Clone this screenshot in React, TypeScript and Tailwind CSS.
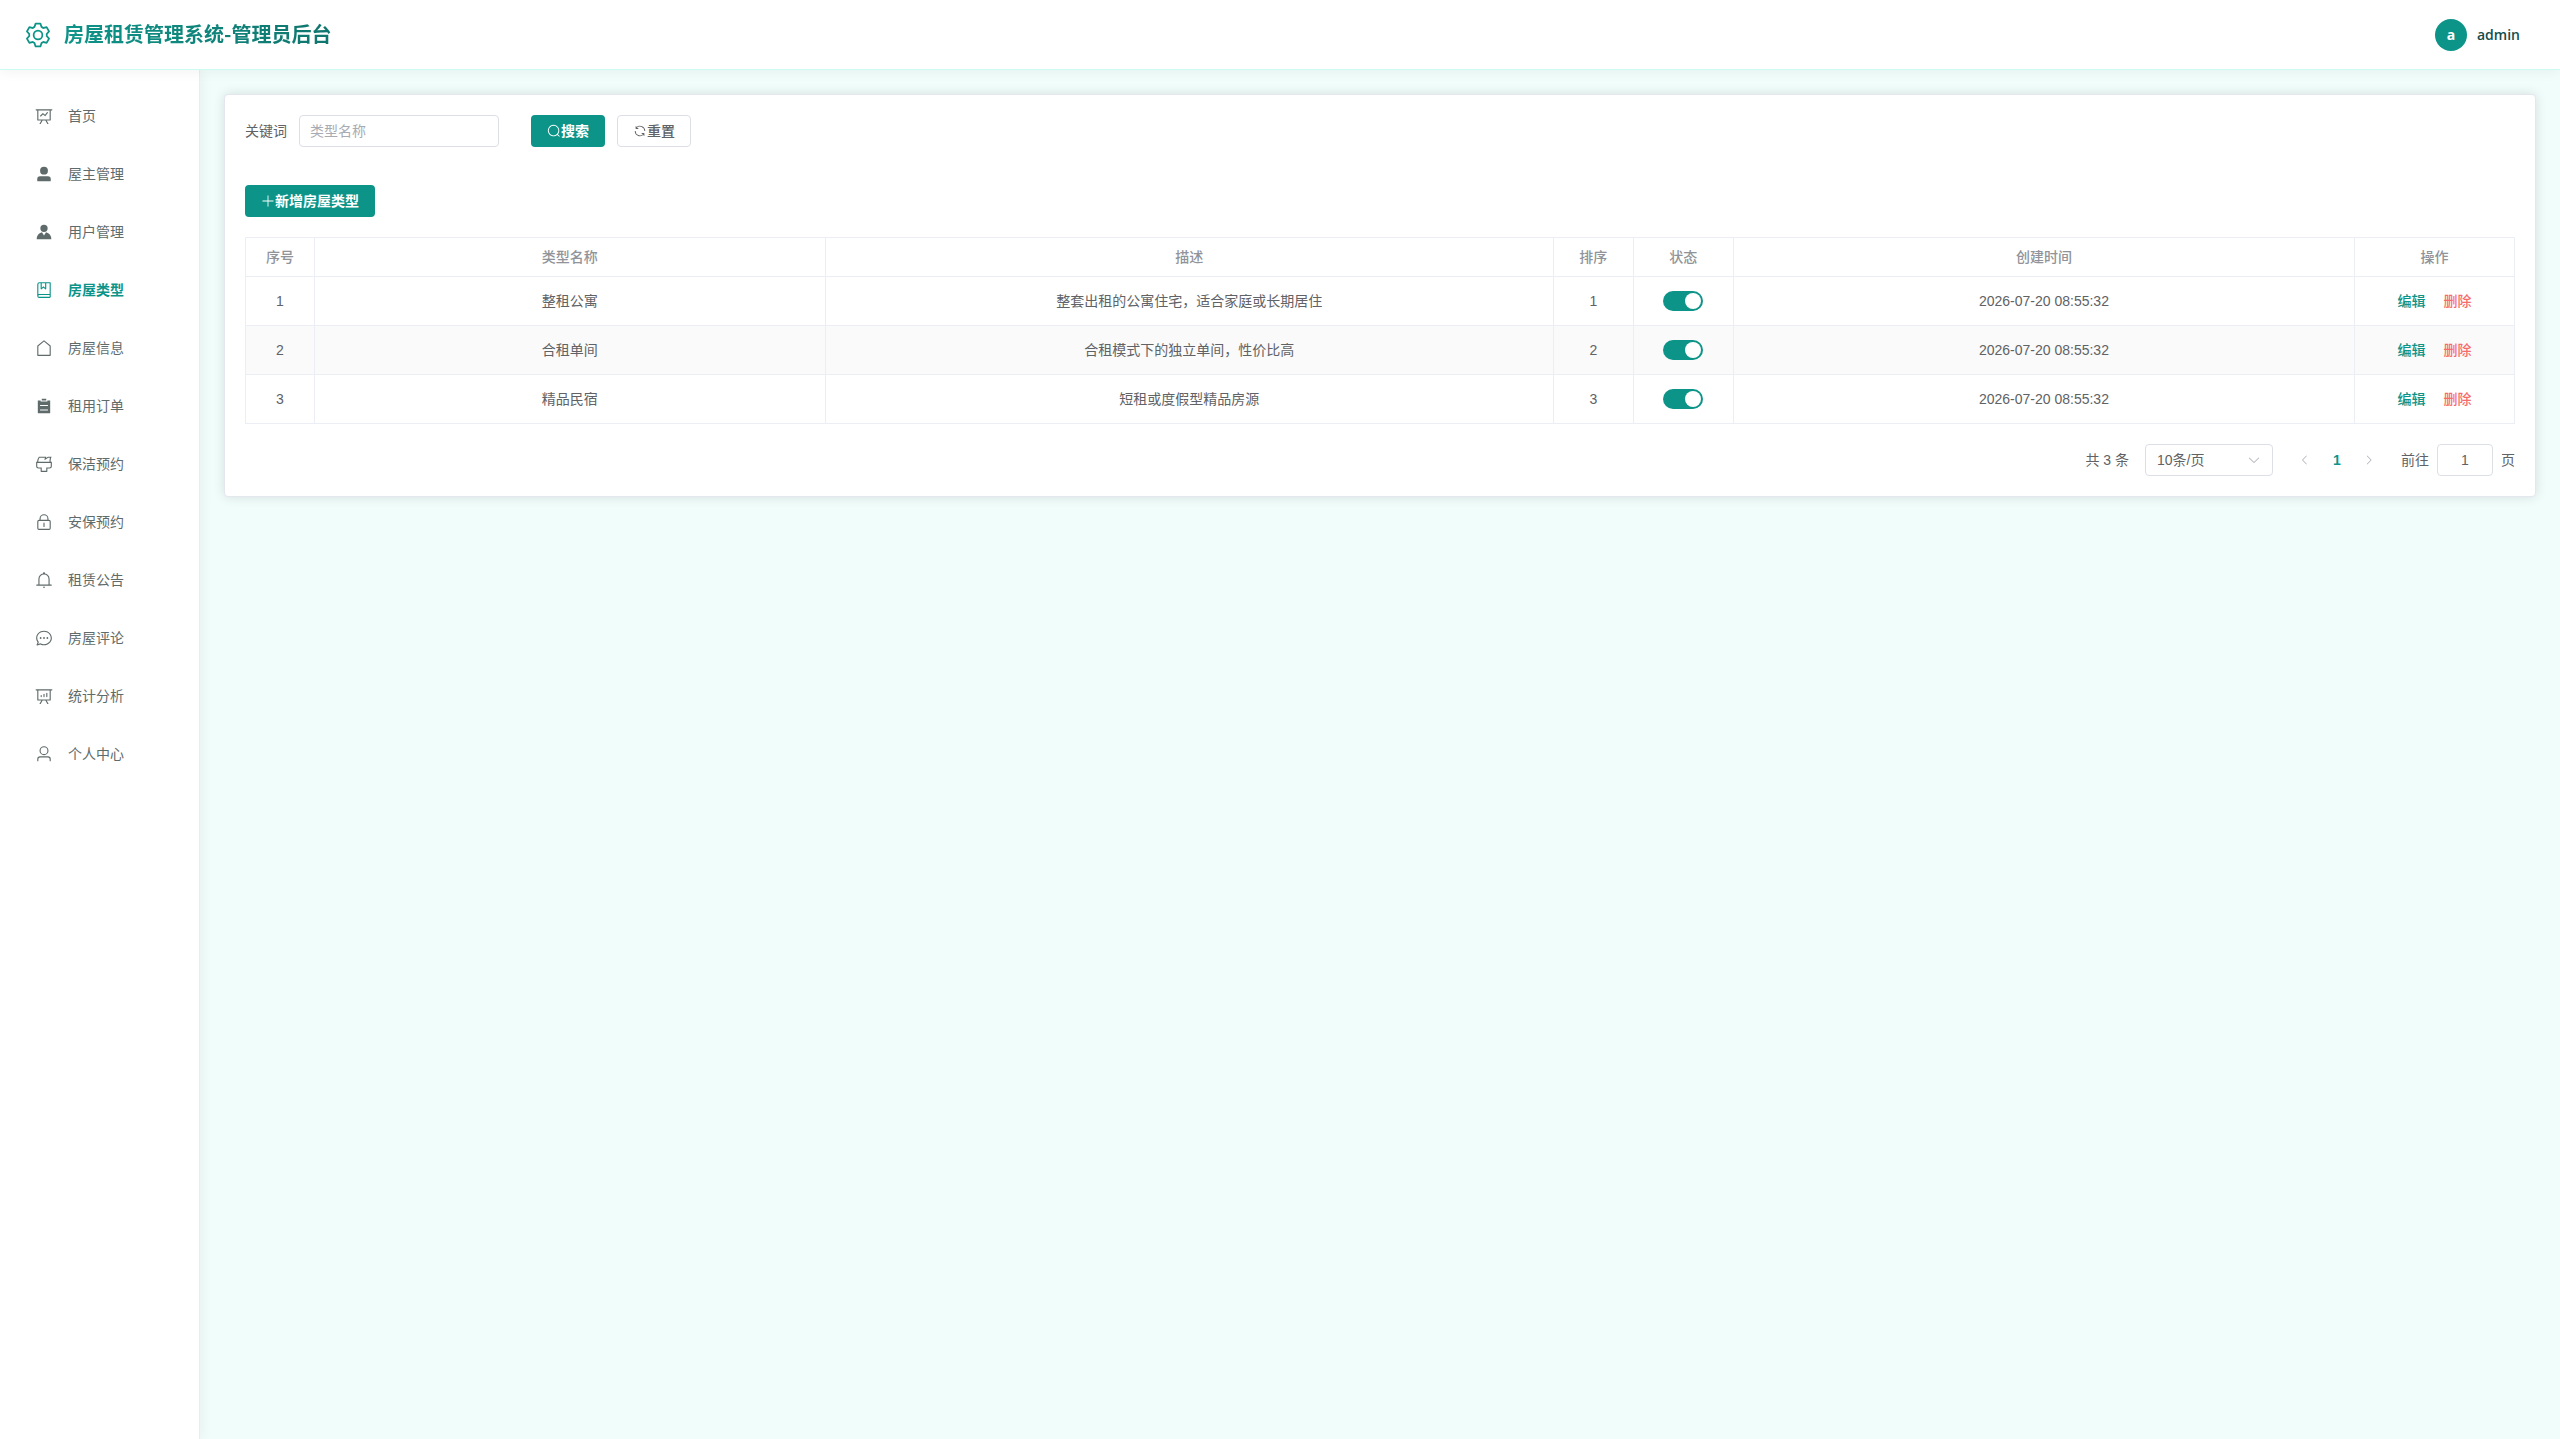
import React, { useState } from "react";

const paths = {
  setting:
    "M600.704 64a32 32 0 0 1 30.464 22.208l35.2 109.376c14.784 7.232 28.928 15.36 42.432 24.512l112.384-24.192a32 32 0 0 1 34.432 15.36L944.32 364.8a32 32 0 0 1-4.032 37.504l-77.12 85.12a357.12 357.12 0 0 1 0 49.024l77.12 85.248a32 32 0 0 1 4.032 37.504l-88.704 153.6a32 32 0 0 1-34.432 15.296L708.8 803.904c-13.44 9.088-27.648 17.28-42.368 24.512l-35.264 109.376A32 32 0 0 1 600.704 960H423.296a32 32 0 0 1-30.464-22.208L357.696 828.48a351.616 351.616 0 0 1-42.56-24.64l-112.32 24.256a32 32 0 0 1-34.432-15.36L79.68 659.2a32 32 0 0 1 4.032-37.504l77.12-85.248a357.12 357.12 0 0 1 0-48.896l-77.12-85.248A32 32 0 0 1 79.68 364.8l88.704-153.6a32 32 0 0 1 34.432-15.296l112.32 24.256c13.568-9.152 27.776-17.408 42.56-24.64l35.2-109.312A32 32 0 0 1 423.232 64H600.64zm-23.424 64H446.72l-36.352 113.088-24.512 11.968a294.113 294.113 0 0 0-34.816 20.096l-22.656 15.36-116.224-25.088-65.28 113.152 79.68 88.192-1.92 27.136a293.12 293.12 0 0 0 0 40.192l1.92 27.136-79.808 88.192 65.344 113.152 116.224-25.024 22.656 15.296a294.113 294.113 0 0 0 34.816 20.096l24.512 11.968L446.72 896h130.688l36.48-113.152 24.448-11.904a288.282 288.282 0 0 0 34.752-20.096l22.592-15.296 116.288 25.024 65.28-113.152-79.744-88.192 1.92-27.136a293.12 293.12 0 0 0 0-40.256l-1.92-27.136 79.808-88.128-65.344-113.152-116.288 24.96-22.592-15.232a287.616 287.616 0 0 0-34.752-20.096l-24.448-11.904L577.344 128zM512 320a192 192 0 1 1 0 384 192 192 0 0 1 0-384zm0 64a128 128 0 1 0 0 256 128 128 0 0 0 0-256z",
  dataLine:
    "M359.168 768H160a32 32 0 0 1-32-32V192H64a32 32 0 0 1 0-64h896a32 32 0 1 1 0 64h-64v544a32 32 0 0 1-32 32H665.216l110.848 192h-73.856L591.36 768H433.024L322.176 960H248.32l110.848-192zM832 192H192v512h640V192zM342.656 534.656a32 32 0 1 1-45.312-45.312L444.992 341.76l125.44 94.08L679.04 300.032a32 32 0 1 1 49.92 39.936L581.632 524.224 451.008 426.24 342.656 534.592z",
  userFilled:
    "M288 320a224 224 0 1 0 448 0 224 224 0 1 0-448 0zm544 608H160a32 32 0 0 1-32-32v-96a160 160 0 0 1 160-160h448a160 160 0 0 1 160 160v96a32 32 0 0 1-32 32z",
  avatar:
    "M628.736 528.896A416 416 0 0 1 928 928H96a415.872 415.872 0 0 1 299.264-399.104L512 704l116.736-175.104zM720 304a208 208 0 1 1-416 0 208 208 0 0 1 416 0z",
  collection:
    "M192 736h640V128H256a64 64 0 0 0-64 64v544zm64-672h608a32 32 0 0 1 32 32v672a32 32 0 0 1-32 32H160l-32 57.536V192A128 128 0 0 1 256 64zM240 800a48 48 0 1 0 0 96h592v-96H240zm0-64h656v160a64 64 0 0 1-64 64H240a112 112 0 0 1 0-224zm144-608v250.88l96-76.8 96 76.8V128H384zm-64-64h320v381.44a32 32 0 0 1-51.968 24.96L480 384l-108.032 86.4A32 32 0 0 1 320 445.44V64z",
  house:
    "M192 413.952V896h640V413.952L512 147.328 192 413.952zM139.52 374.4l352-293.312a32 32 0 0 1 40.96 0l352 293.312A32 32 0 0 1 896 398.976V928a32 32 0 0 1-32 32H160a32 32 0 0 1-32-32V398.976a32 32 0 0 1 11.52-24.576z",
  list: "M704 192h160v736H160V192h160v64h384v-64zM288 512h448v-64H288v64zm0 256h448v-64H288v64zm96-576V96h256v96H384z",
  brush:
    "M896 448H128v192a64 64 0 0 0 64 64h192v192h256V704h192a64 64 0 0 0 64-64V448zm-770.752-64c0-47.552 5.248-90.24 15.552-128 14.72-54.016 42.496-107.392 83.2-160h417.28l-15.36 70.336L736 96h211.2c-24.832 42.88-41.92 96.256-51.2 160a663.872 663.872 0 0 0-6.144 128H960v256a128 128 0 0 1-128 128H704v160a32 32 0 0 1-32 32H352a32 32 0 0 1-32-32V768H192A128 128 0 0 1 64 640V384h61.248zm64 0h636.544c-2.048-45.824.256-91.584 6.848-137.216 4.48-30.848 10.688-59.776 18.688-86.784h-96.64l-221.12 141.248L561.92 160H256.512c-25.856 37.888-43.776 75.456-53.952 112.832-8.768 32.064-13.248 69.12-13.312 111.168z",
  lock: "M224 448a32 32 0 0 0-32 32v384a32 32 0 0 0 32 32h576a32 32 0 0 0 32-32V480a32 32 0 0 0-32-32H224zm0-64h576a96 96 0 0 1 96 96v384a96 96 0 0 1-96 96H224a96 96 0 0 1-96-96V480a96 96 0 0 1 96-96zM512 544a32 32 0 0 1 32 32v192a32 32 0 1 1-64 0V576a32 32 0 0 1 32-32zm192-160v-64a192 192 0 1 0-384 0v64h384zM512 64a256 256 0 0 1 256 256v128H256V320A256 256 0 0 1 512 64z",
  bell: "M512 64a64 64 0 0 1 64 64v64H448v-64a64 64 0 0 1 64-64zM256 768h512V448a256 256 0 1 0-512 0v320zm256-640a320 320 0 0 1 320 320v384H192V448a320 320 0 0 1 320-320zM96 768h832q32 0 32 32t-32 32H96q-32 0-32-32t32-32zm352 128h128a64 64 0 0 1-128 0z",
  chat: "m174.72 855.68 135.296-45.12 23.68 11.84C388.096 849.536 448.576 864 512 864c211.84 0 384-166.784 384-352S723.84 160 512 160 128 326.784 128 512c0 69.12 24.96 139.264 70.848 199.232l22.08 28.8-46.272 115.584zm-45.248 82.56A32 32 0 0 1 89.6 896l58.368-145.92C94.72 680.32 64 596.864 64 512 64 299.904 256 96 512 96s448 203.904 448 416-192 416-448 416a461.056 461.056 0 0 1-206.912-48.384l-175.616 58.56zM512 563.2a51.2 51.2 0 1 1 0-102.4 51.2 51.2 0 0 1 0 102.4zm192 0a51.2 51.2 0 1 1 0-102.4 51.2 51.2 0 0 1 0 102.4zm-384 0a51.2 51.2 0 1 1 0-102.4 51.2 51.2 0 0 1 0 102.4z",
  dataAnalysis:
    "m665.216 768 110.848 192h-73.856L591.36 768H433.024L322.176 960H248.32l110.848-192H160a32 32 0 0 1-32-32V192H64a32 32 0 0 1 0-64h896a32 32 0 1 1 0 64h-64v544a32 32 0 0 1-32 32H665.216zM832 192H192v512h640V192zM352 448a32 32 0 0 1 32 32v64a32 32 0 0 1-64 0v-64a32 32 0 0 1 32-32zm160-64a32 32 0 0 1 32 32v128a32 32 0 0 1-64 0V416a32 32 0 0 1 32-32zm160-64a32 32 0 0 1 32 32v192a32 32 0 1 1-64 0V352a32 32 0 0 1 32-32z",
  user: "M512 512a192 192 0 1 0 0-384 192 192 0 0 0 0 384zm0 64a256 256 0 1 1 0-512 256 256 0 0 1 0 512zm320 320v-96a96 96 0 0 0-96-96H288a96 96 0 0 0-96 96v96a32 32 0 1 1-64 0v-96a160 160 0 0 1 160-160h448a160 160 0 0 1 160 160v96a32 32 0 1 1-64 0z",
  search:
    "m795.904 750.72 124.992 124.928a32 32 0 0 1-45.248 45.248L750.656 795.904a416 416 0 1 1 45.248-45.248zM480 832a352 352 0 1 0 0-704 352 352 0 0 0 0 704z",
  refresh:
    "M771.776 794.88A384 384 0 0 1 128 512h64a320 320 0 0 0 555.712 216.448H654.72a32 32 0 1 1 0-64h149.056a32 32 0 0 1 32 32v148.928a32 32 0 1 1-64 0v-50.56zM276.288 295.616h92.992a32 32 0 0 1 0 64H220.16a32 32 0 0 1-32-32V178.56a32 32 0 0 1 64 0v50.56A384 384 0 0 1 896.128 512h-64a320 320 0 0 0-555.776-216.384z",
  plus: "M480 480V128a32 32 0 0 1 64 0v352h352a32 32 0 1 1 0 64H544v352a32 32 0 1 1-64 0V544H128a32 32 0 0 1 0-64h352z",
  arrowDown:
    "M831.872 340.864 512 652.672 192.128 340.864a30.592 30.592 0 0 0-42.752 0 29.12 29.12 0 0 0 0 41.6L489.664 714.24a32 32 0 0 0 44.672 0l340.288-331.712a29.12 29.12 0 0 0 0-41.728 30.592 30.592 0 0 0-42.752 0z",
  arrowLeft:
    "M609.408 149.376 277.76 489.6a32 32 0 0 0 0 44.672l331.648 340.352a29.12 29.12 0 0 0 41.728 0 30.592 30.592 0 0 0 0-42.752L339.264 511.936l311.872-319.872a30.592 30.592 0 0 0 0-42.688 29.12 29.12 0 0 0-41.728 0z",
  arrowRight:
    "M340.864 149.312a30.592 30.592 0 0 0 0 42.752L652.736 512 340.864 831.872a30.592 30.592 0 0 0 0 42.752 29.12 29.12 0 0 0 41.728 0L714.24 534.336a32 32 0 0 0 0-44.672L382.592 149.376a29.12 29.12 0 0 0-41.728 0z",
};

type IconName = keyof typeof paths;

function Icon({ name, className }: { name: IconName; className: string }) {
  return (
    <svg viewBox="0 0 1024 1024" fill="currentColor" aria-hidden="true" className={className}>
      <path d={paths[name]} />
    </svg>
  );
}

const menu: { label: string; icon: IconName; active?: boolean }[] = [
  { label: "首页", icon: "dataLine" },
  { label: "屋主管理", icon: "userFilled" },
  { label: "用户管理", icon: "avatar" },
  { label: "房屋类型", icon: "collection", active: true },
  { label: "房屋信息", icon: "house" },
  { label: "租用订单", icon: "list" },
  { label: "保洁预约", icon: "brush" },
  { label: "安保预约", icon: "lock" },
  { label: "租赁公告", icon: "bell" },
  { label: "房屋评论", icon: "chat" },
  { label: "统计分析", icon: "dataAnalysis" },
  { label: "个人中心", icon: "user" },
];

const rows = [
  { id: 1, name: "整租公寓", desc: "整套出租的公寓住宅，适合家庭或长期居住", time: "2026-07-20 08:55:32" },
  { id: 2, name: "合租单间", desc: "合租模式下的独立单间，性价比高", time: "2026-07-20 08:55:32" },
  { id: 3, name: "精品民宿", desc: "短租或度假型精品房源", time: "2026-07-20 08:55:32" },
];

const columns = [
  { title: "序号", width: "w-[69px]" },
  { title: "类型名称", width: "w-[22.5%]" },
  { title: "描述", width: "w-[32.1%]" },
  { title: "排序", width: "w-[80px]" },
  { title: "状态", width: "w-[100px]" },
  { title: "创建时间", width: "" },
  { title: "操作", width: "w-[160px]" },
];

function Header() {
  return (
    <header className="relative z-10 flex h-[70px] shrink-0 items-center justify-between border-b border-[#ccfbf1] bg-white pr-10 pl-6 shadow-[0_2px_12px_rgba(0,0,0,0.05)]">
      <div className="flex items-center gap-3 text-[#0d9488]">
        <Icon name="setting" className="size-7" />
        <h1 className="bg-linear-to-r from-[#0d9488] to-[#0f766e] bg-clip-text font-['Noto_Sans_CJK_SC',sans-serif] text-[20px] font-bold text-transparent">
          房屋租赁管理系统-管理员后台
        </h1>
      </div>
      <button type="button" className="flex items-center gap-2.5 font-['Open_Sans',sans-serif] text-sm">
        <span className="flex size-8 items-center justify-center rounded-full bg-[#0d9488] font-bold text-white">a</span>
        <span className="font-semibold text-[#134e4a]">admin</span>
      </button>
    </header>
  );
}

function Sidebar() {
  return (
    <aside className="w-[200px] shrink-0 border-r border-[#ccfbf1] bg-white pt-[21px] shadow-[2px_0_12px_rgba(0,0,0,0.05)]">
      <nav className="flex flex-col gap-2 px-3">
        {menu.map((item) => (
          <a
            key={item.label}
            href="#"
            aria-current={item.active ? "page" : undefined}
            className={
              item.active
                ? "flex h-[50px] items-center gap-3 pl-5 font-bold text-[#0d9488]"
                : "flex h-[50px] items-center gap-3 pl-5 text-[#5f6b6a]"
            }
          >
            <span className="flex w-6 justify-center">
              <Icon name={item.icon} className="size-[18px]" />
            </span>
            {item.label}
          </a>
        ))}
      </nav>
    </aside>
  );
}

function TypeTable() {
  const [enabled, setEnabled] = useState<Record<number, boolean>>({ 1: true, 2: true, 3: true });
  return (
    <table className="mt-5 w-full table-fixed border-separate border-spacing-0 border-t border-l border-[#ebeef5] text-center">
      <colgroup>
        {columns.map((c) => (
          <col key={c.title} className={c.width} />
        ))}
      </colgroup>
      <thead>
        <tr className="h-[39px] text-[#909399]">
          {columns.map((c) => (
            <th key={c.title} scope="col" className="border-r border-b border-[#ebeef5] font-medium">
              {c.title}
            </th>
          ))}
        </tr>
      </thead>
      <tbody className="[&_td]:border-r [&_td]:border-b [&_td]:border-[#ebeef5]">
        {rows.map((r) => (
          <tr key={r.id} className="h-[49px] even:bg-[#fafafa]">
            <td>{r.id}</td>
            <td>{r.name}</td>
            <td>{r.desc}</td>
            <td>{r.id}</td>
            <td>
              <input
                type="checkbox"
                role="switch"
                aria-label={r.name + "状态"}
                checked={enabled[r.id]}
                onChange={(e) => setEnabled({ ...enabled, [r.id]: e.target.checked })}
                className="mx-auto block h-5 w-10 cursor-pointer appearance-none rounded-full bg-[#dcdfe6] p-0.5 before:block before:size-4 before:rounded-full before:bg-white checked:bg-[#0d9488] checked:before:ml-auto"
              />
            </td>
            <td>{r.time}</td>
            <td>
              <div className="flex justify-center gap-[18px] font-medium">
                <button type="button" className="text-[#0d9488]">编辑</button>
                <button type="button" className="text-[#f56c6c]">删除</button>
              </div>
            </td>
          </tr>
        ))}
      </tbody>
    </table>
  );
}

function Pagination() {
  return (
    <div className="mt-5 flex items-center justify-end">
      <span className="mr-4">共 3 条</span>
      <div className="relative mr-4">
        <select
          aria-label="每页条数"
          className="h-8 w-32 appearance-none rounded border border-[#dcdfe6] bg-white pl-[11px]"
        >
          <option>10条/页</option>
        </select>
        <Icon name="arrowDown" className="pointer-events-none absolute top-[9px] right-3 size-3.5 text-[#a8abb2]" />
      </div>
      <button type="button" aria-label="上一页" disabled className="flex size-8 items-center justify-center text-[#a8abb2]">
        <Icon name="arrowLeft" className="size-3" />
      </button>
      <button type="button" className="size-8 font-bold text-[#0d9488]">1</button>
      <button type="button" aria-label="下一页" disabled className="mr-4 flex size-8 items-center justify-center text-[#a8abb2]">
        <Icon name="arrowRight" className="size-3" />
      </button>
      <label className="flex items-center gap-2">
        前往
        <input defaultValue="1" className="h-8 w-14 rounded border border-[#dcdfe6] text-center" />
        页
      </label>
    </div>
  );
}

export default function App() {
  return (
    <div className="flex min-h-screen flex-col bg-[#f0fdfa] font-['Liberation_Sans','Noto_Sans_CJK_SC',sans-serif] text-sm text-[#606266]">
      <Header />
      <div className="flex grow">
        <Sidebar />
        <main className="min-w-0 grow p-6">
          <section className="rounded border border-[#e4e7ed] bg-white p-5 shadow-[0_0_12px_rgba(0,0,0,0.12)]">
            <form className="flex items-center" onSubmit={(e) => e.preventDefault()}>
              <label htmlFor="keyword" className="pr-3">关键词</label>
              <input
                id="keyword"
                placeholder="类型名称"
                className="mr-8 h-8 w-[200px] rounded border border-[#dcdfe6] px-2.5 placeholder:text-[#a8abb2]"
              />
              <button type="submit" className="mr-3 flex h-8 items-center rounded bg-[#0d9488] px-4 font-bold text-white">
                <Icon name="search" className="size-3.5" />
                搜索
              </button>
              <button type="reset" className="flex h-8 items-center rounded border border-[#dcdfe6] px-[15px] font-medium">
                <Icon name="refresh" className="size-3.5" />
                重置
              </button>
            </form>
            <button type="button" className="mt-[38px] flex h-8 items-center rounded bg-[#0d9488] px-4 font-bold text-white">
              <Icon name="plus" className="size-3.5" />
              新增房屋类型
            </button>
            <TypeTable />
            <Pagination />
          </section>
        </main>
      </div>
    </div>
  );
}
